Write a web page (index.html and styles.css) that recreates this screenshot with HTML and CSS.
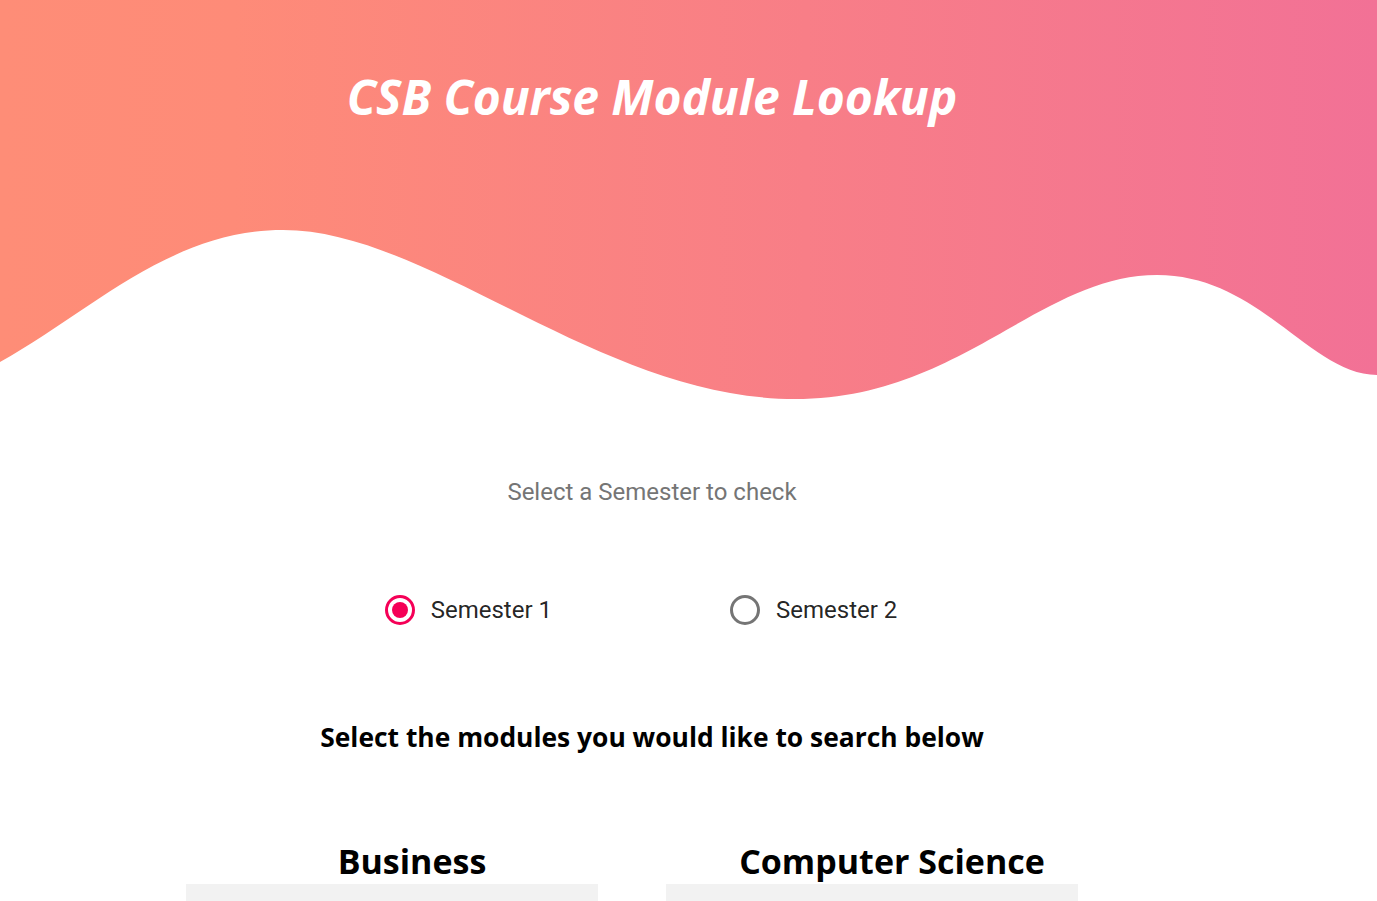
FILE: index.html
```html
<!DOCTYPE html>
<html lang="en">
<head>
<meta charset="utf-8">
<title>CSB Course Module Lookup</title>
<link rel="stylesheet" href="styles.css">
</head>
<body>
<header class="hero">
  <div class="hero-inner">
    <h1 class="hero-title">CSB Course Module Lookup</h1>
  </div>
  <svg class="wave" viewBox="0 0 1377 181" preserveAspectRatio="none" aria-hidden="true">
    <path d="M0,142 C90,92 170,10 283,10 C430,10 600,179 795,179 C960,179 1040,55 1157,55 C1260,55 1310,155 1377,155 L1377,181 L0,181 Z" fill="#ffffff"/>
  </svg>
</header>
<main class="page">
  <p class="prompt">Select a Semester to check</p>
  <div class="semesters">
    <label class="sem">
      <span class="radio checked"></span>
      <span class="sem-label">Semester 1</span>
    </label>
    <label class="sem">
      <span class="radio"></span>
      <span class="sem-label">Semester 2</span>
    </label>
  </div>
  <h2 class="modules-heading">Select the modules you would like to search below</h2>
  <div class="columns">
    <section class="col">
      <h3 class="col-title">Business</h3>
      <div class="box">
        <ul class="module-list">
          <li>Accounting Principles</li>
          <li>Business Law</li>
          <li>Marketing Fundamentals</li>
          <li>Organisational Behaviour</li>
        </ul>
      </div>
    </section>
    <section class="col">
      <h3 class="col-title">Computer Science</h3>
      <div class="box">
        <ul class="module-list">
          <li>Programming Fundamentals</li>
          <li>Data Structures</li>
          <li>Databases</li>
          <li>Web Development</li>
        </ul>
      </div>
    </section>
  </div>
</main>
</body>
</html>
```
FILE: styles.css
```css
html, body {
  margin: 0;
  padding: 0;
  background: #ffffff;
}

body {
  font-family: "Open Sans", "Liberation Sans", sans-serif;
  color: #000000;
}

.hero {
  height: 401px;
  display: flex;
  flex-direction: column;
  background: linear-gradient(90deg, #fe8d77 0%, #fe8b78 17%, #f27196 100%);
}

.hero-inner {
  max-width: 1304px;
  padding-top: 68px;
}

.hero-title {
  margin: 0;
  text-align: center;
  font-family: "Open Sans", sans-serif;
  font-weight: 700;
  font-style: italic;
  font-size: 48px;
  line-height: 58px;
  color: #ffffff;
  letter-spacing: -0.1px;
}

.wave {
  display: block;
  width: 100%;
  height: 181px;
  margin-top: auto;
}

.page {
  max-width: 1304px;
  display: flex;
  flex-direction: column;
  align-items: center;
}

.prompt {
  margin: 77px 0 0;
  font-family: Roboto, sans-serif;
  font-size: 24px;
  line-height: 28px;
  color: #757575;
  text-align: center;
}

.semesters {
  margin-top: 83px;
  align-self: stretch;
  display: flex;
  justify-content: center;
  gap: 178px;
  padding-right: 22px;
  height: 42px;
}

.sem {
  display: flex;
  align-items: center;
  gap: 16px;
  cursor: pointer;
}

.radio {
  box-sizing: border-box;
  width: 30px;
  height: 30px;
  border-radius: 50%;
  border: 3px solid #757575;
  display: flex;
  align-items: center;
  justify-content: center;
}

.radio.checked {
  border-color: #f50057;
}

.radio.checked::after {
  content: "";
  width: 16px;
  height: 16px;
  border-radius: 50%;
  background: #f50057;
}

.sem-label {
  font-family: Roboto, sans-serif;
  font-size: 24px;
  line-height: 28px;
  color: rgba(0, 0, 0, 0.87);
}

.modules-heading {
  margin: 88px 0 0;
  font-family: "Open Sans", sans-serif;
  font-weight: 700;
  font-size: 26.4px;
  line-height: 36px;
  text-align: center;
}

.columns {
  margin-top: 84px;
  display: grid;
  grid-template-columns: 452px 452px;
  gap: 28px;
}

.col {
  display: flex;
  flex-direction: column;
}

.col-title {
  margin: 0 0 1px;
  font-family: "Open Sans", sans-serif;
  font-weight: 700;
  font-size: 34px;
  line-height: 44px;
  text-align: center;
}

.box {
  width: 412px;
  min-height: 260px;
  background: #f2f2f2;
}

.module-list {
  list-style: none;
  margin: 0;
  padding: 28px 24px;
  font-family: Roboto, sans-serif;
  font-size: 18px;
  line-height: 36px;
}
```
